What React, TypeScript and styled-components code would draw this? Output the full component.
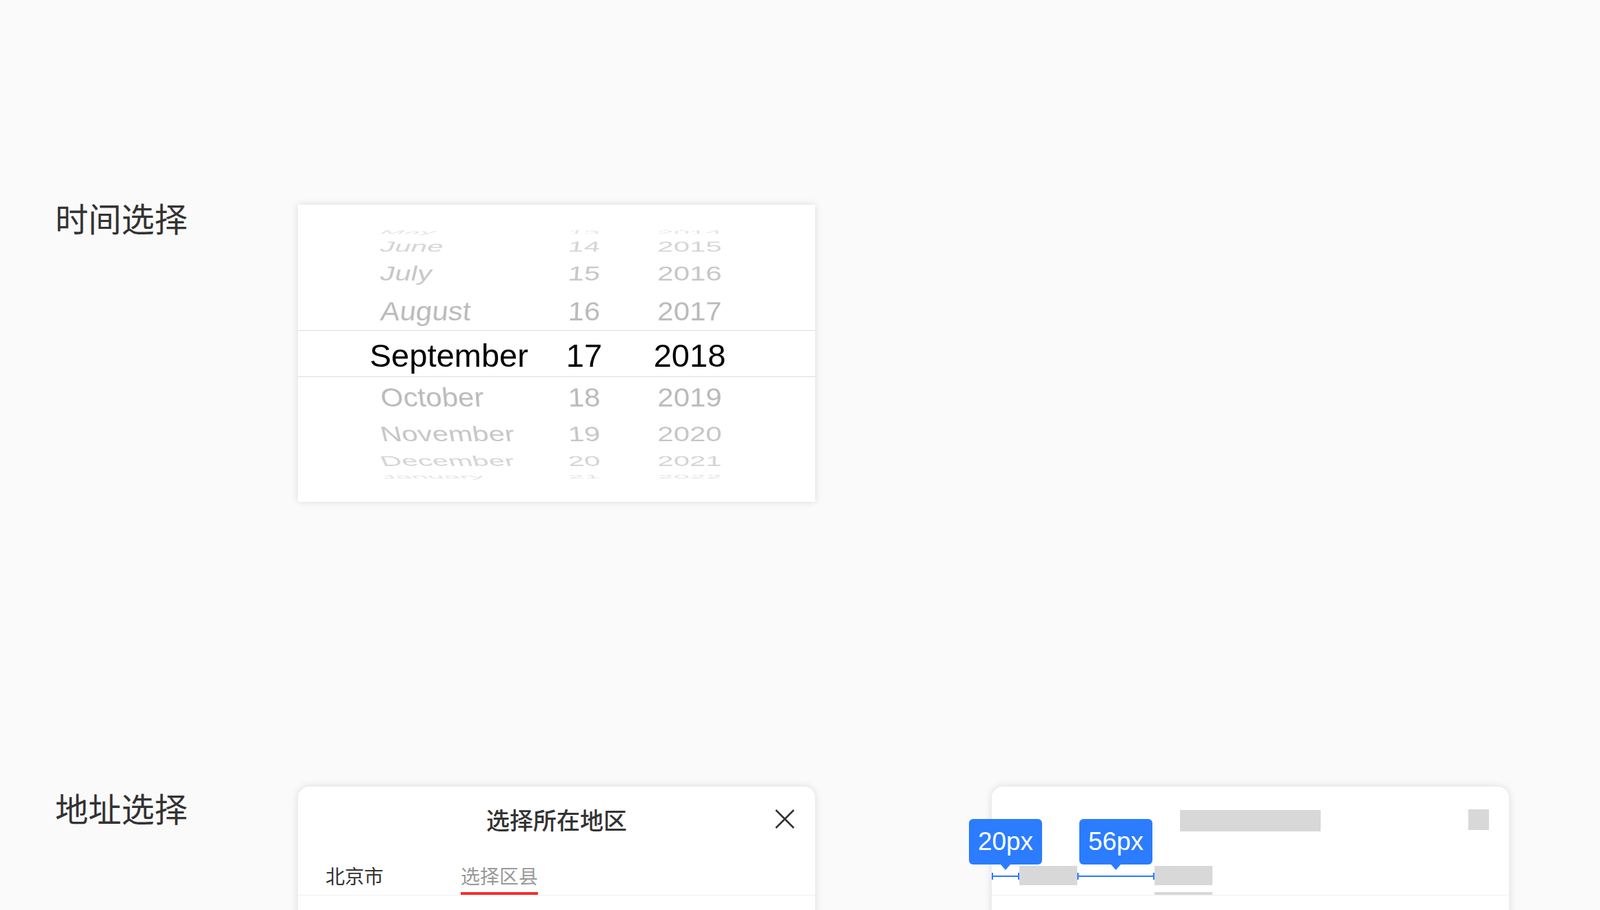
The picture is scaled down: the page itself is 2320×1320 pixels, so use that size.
import styled, { createGlobalStyle } from "styled-components";

const GlobalStyle = createGlobalStyle`
  body {
    margin: 0;
    background: #fafafa;
    font-family: "Noto Sans CJK SC", "Noto Sans", sans-serif;
  }
`;

const Page = styled.div`
  width: 2320px;
  height: 1320px;
  overflow: hidden;
  box-sizing: border-box;
  padding: 297px 0 0 80px;
`;

const Section = styled.div<{ $top?: number }>`
  display: flex;
  align-items: flex-start;
  margin-top: ${({ $top }) => $top || 0}px;
`;

const Label = styled.div<{ $offset: number }>`
  width: 352px;
  flex-shrink: 0;
  margin-top: ${({ $offset }) => $offset}px;
  height: 58px;
  line-height: 58px;
  font-size: 48px;
  color: #333;
  white-space: nowrap;
`;

/* ---------- date picker ---------- */

const PickerCard = styled.div`
  width: 750px;
  flex-shrink: 0;
  box-sizing: border-box;
  padding: 30px 0;
  background: #fff;
  box-shadow: 0 0 10px rgba(0, 0, 0, 0.13);
  display: flex;
  flex-direction: column;
  font-family: "Liberation Sans", Arial, sans-serif;
`;

const WheelRow = styled.div<{ $h: number; $deg: number; $color: string; $selected?: boolean }>`
  display: grid;
  grid-template-columns: 250px 90px 216px;
  padding-left: 120px;
  box-sizing: border-box;
  height: ${({ $h }) => $h}px;
  line-height: ${({ $h }) => $h}px;
  font-size: ${({ $selected }) => ($selected ? 47 : 42)}px;
  color: ${({ $color }) => $color};
  white-space: nowrap;
  transform-origin: 76% 50%;
  transform: perspective(1800px) rotateX(${({ $deg }) => $deg}deg);
  ${({ $selected }) =>
    $selected &&
    `
    border-top: 1px solid #dcdcdc;
    border-bottom: 1px solid #dcdcdc;
    line-height: 72px;
  `}
`;

const Cell = styled.span<{ $align: "left" | "center"; $shift?: number }>`
  text-align: ${({ $align }) => $align};
  margin-left: ${({ $shift }) => $shift || 0}px;
`;

const wheel = [
  { month: "May", day: 13, year: 2014, h: 20, deg: 80, color: "#e4e4e4" },
  { month: "June", day: 14, year: 2015, h: 22, deg: 60, color: "#d4d4d4" },
  { month: "July", day: 15, year: 2016, h: 56, deg: 46, color: "#c6c6c6" },
  { month: "August", day: 16, year: 2017, h: 54, deg: 25, color: "#bababa" },
  { month: "September", day: 17, year: 2018, h: 68, deg: 0, color: "#000", selected: true },
  { month: "October", day: 18, year: 2019, h: 60, deg: -25, color: "#bababa" },
  { month: "November", day: 19, year: 2020, h: 46, deg: -44, color: "#c6c6c6" },
  { month: "December", day: 20, year: 2021, h: 32, deg: -61, color: "#d4d4d4" },
  { month: "January", day: 21, year: 2022, h: 13, deg: -80, color: "#e4e4e4" },
];

const DatePicker = () => (
  <PickerCard>
    {wheel.map((r) => (
      <WheelRow key={r.month} $h={r.h} $deg={r.deg} $color={r.color} $selected={r.selected}>
        <Cell $align="left" $shift={r.selected ? -16 : 0}>
          {r.month}
        </Cell>
        <Cell $align="center">{r.day}</Cell>
        <Cell $align="center">{r.year}</Cell>
      </WheelRow>
    ))}
  </PickerCard>
);

/* ---------- address sheet ---------- */

const Sheet = styled.div<{ $gap?: number }>`
  position: relative;
  width: 750px;
  height: 200px;
  flex-shrink: 0;
  margin-left: ${({ $gap }) => $gap || 0}px;
  background: #fff;
  border-radius: 16px 16px 0 0;
  box-shadow: 0 0 12px rgba(0, 0, 0, 0.13);
`;

const SheetHeader = styled.div`
  height: 96px;
  padding: 0 29px;
  display: grid;
  grid-template-columns: 1fr auto 1fr;
  align-items: center;
`;

const Title = styled.div`
  grid-column: 2;
  font-size: 34px;
  font-weight: 500;
  color: #333;
  line-height: 40px;
`;

const Close = styled.div`
  grid-column: 3;
  justify-self: end;
  width: 30px;
  height: 30px;
  display: flex;
  margin-top: -2px;
`;

const TitleBar = styled.div`
  grid-column: 2;
  width: 204px;
  height: 31px;
  margin-top: 2px;
  background: #d8d8d8;
`;

const CloseBox = styled.div`
  grid-column: 3;
  justify-self: end;
  width: 30px;
  height: 30px;
  background: #d8d8d8;
`;

const Tabs = styled.div`
  display: flex;
  gap: 112px;
  padding-left: 40px;
  border-bottom: 1px solid #f0f0f0;
`;

const Tab = styled.div<{ $active?: boolean }>`
  font-size: 28px;
  line-height: 40px;
  padding: 13px 0 4px;
  color: ${({ $active }) => ($active ? "#999" : "#333")};
  border-bottom: 4px solid ${({ $active }) => ($active ? "#fa2d2d" : "transparent")};
`;

const GhostTab = styled.div<{ $active?: boolean }>`
  width: 84px;
  padding: 19px 0 10px;
  border-bottom: 4px solid ${({ $active }) => ($active ? "#d8d8d8" : "transparent")};
`;

const GhostBlock = styled.div`
  height: 28px;
  background: #d8d8d8;
`;

const Measure = styled.div<{ $left: number; $width: number }>`
  position: absolute;
  top: 47px;
  left: ${({ $left }) => $left}px;
  width: ${({ $width }) => $width}px;
  display: flex;
  flex-direction: column;
  align-items: center;
`;

const Tip = styled.div`
  position: relative;
  flex-shrink: 0;
  width: 106px;
  height: 66px;
  border-radius: 6px;
  background: #2b7cff;
  color: #fff;
  font-family: "Liberation Sans", Arial, sans-serif;
  font-size: 37px;
  display: flex;
  align-items: center;
  justify-content: center;

  &::after {
    content: "";
    position: absolute;
    bottom: -8px;
    left: 50%;
    transform: translateX(-50%);
    border-left: 7px solid transparent;
    border-right: 7px solid transparent;
    border-top: 8px solid #2b7cff;
  }
`;

const Rule = styled.div`
  position: relative;
  align-self: stretch;
  margin-top: 16px;
  height: 2px;
  background: #2b7cff;

  &::before,
  &::after {
    content: "";
    position: absolute;
    top: -4px;
    width: 2px;
    height: 10px;
    background: #2b7cff;
  }
  &::before {
    left: 0;
  }
  &::after {
    right: 0;
  }
`;

const CloseIcon = () => (
  <svg width="30" height="30" viewBox="0 0 30 30">
    <path d="M2 2 L28 28 M28 2 L2 28" stroke="#333" strokeWidth="2.6" fill="none" />
  </svg>
);

const AddressSheet = () => (
  <Sheet>
    <SheetHeader>
      <Title>选择所在地区</Title>
      <Close>
        <CloseIcon />
      </Close>
    </SheetHeader>
    <Tabs>
      <Tab>北京市</Tab>
      <Tab $active>选择区县</Tab>
    </Tabs>
  </Sheet>
);

const SpecSheet = () => (
  <Sheet $gap={256}>
    <SheetHeader>
      <TitleBar />
      <CloseBox />
    </SheetHeader>
    <Tabs>
      <GhostTab>
        <GhostBlock />
      </GhostTab>
      <GhostTab $active>
        <GhostBlock />
      </GhostTab>
    </Tabs>
    <Measure $left={0} $width={40}>
      <Tip>20px</Tip>
      <Rule />
    </Measure>
    <Measure $left={124} $width={112}>
      <Tip>56px</Tip>
      <Rule />
    </Measure>
  </Sheet>
);

const App = () => (
  <>
    <GlobalStyle />
    <Page>
      <Section>
        <Label $offset={-11}>时间选择</Label>
        <DatePicker />
      </Section>
      <Section $top={413}>
        <Label $offset={1}>地址选择</Label>
        <AddressSheet />
        <SpecSheet />
      </Section>
    </Page>
  </>
);

export default App;
